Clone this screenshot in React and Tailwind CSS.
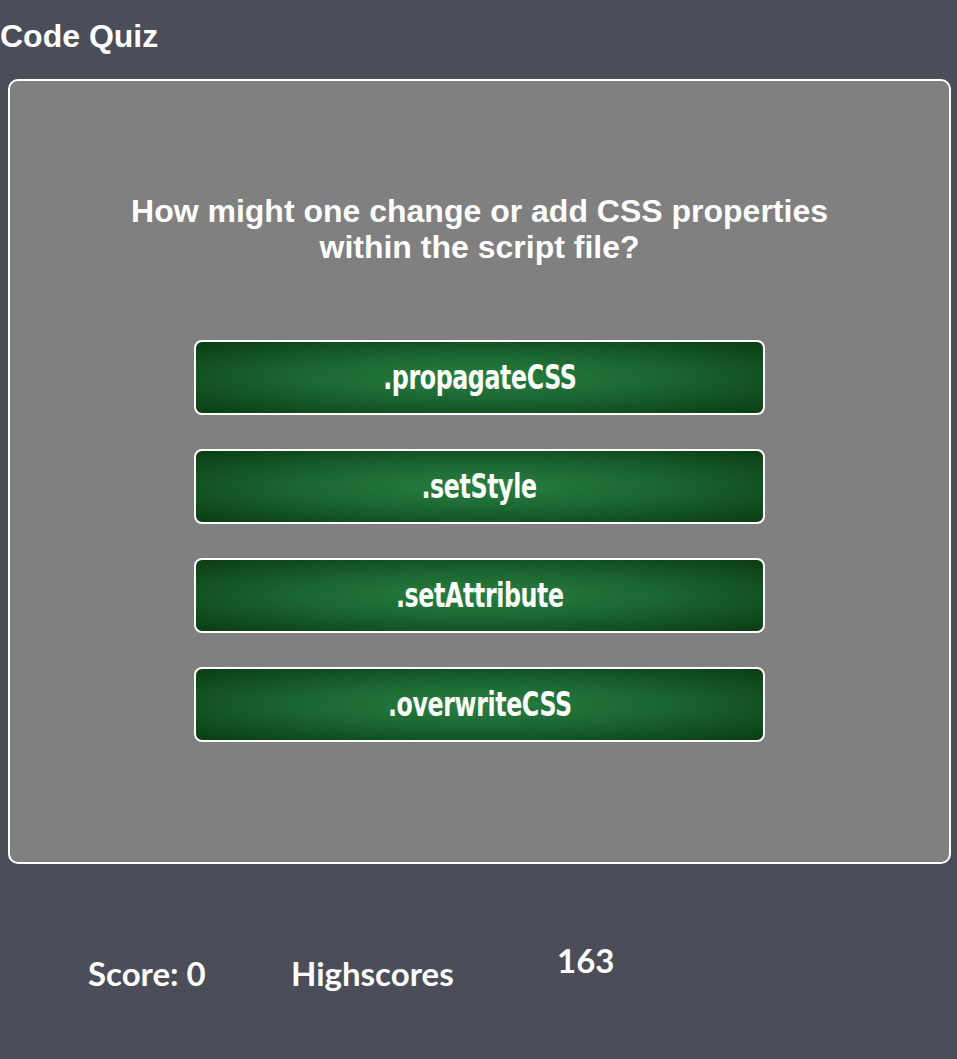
import React from 'react';

const answers = ['.propagateCSS', '.setStyle', '.setAttribute', '.overwriteCSS'];

const App = () => {
  return (
    <div className="min-h-screen w-full bg-[#4b4d58] font-['Liberation_Sans',Arial,sans-serif] text-white pb-10">
      {/* Header */}
      <header className="h-[79px] pt-[18px]">
        <h1 className="text-[32px] leading-[36px] font-bold">Code Quiz</h1>
      </header>

      {/* Quiz card */}
      <main className="ml-2 w-[943px] rounded-[10px] border-2 border-white bg-[#808080] pt-[112px] pb-[120px]">
        <h2 className="mx-auto max-w-[720px] text-center text-[32px] leading-[36px] font-bold">
          How might one change or add CSS properties within the script file?
        </h2>
        <div className="mt-[75px] flex flex-col items-center gap-[34px]">
          {answers.map((a) => (
            <button
              key={a}
              className="flex h-[75px] w-[571px] items-center justify-center rounded-lg border-2 border-white bg-[radial-gradient(ellipse_at_center,#287f40_0%,#1b6631_45%,#0a3c12_100%)]"
            >
              <span className="inline-block scale-x-[0.8] font-['DejaVu_Sans',sans-serif] font-stretch-condensed text-[33px] leading-none font-bold tracking-[-0.5px]">
                {a}
              </span>
            </button>
          ))}
        </div>
      </main>

      {/* Footer */}
      <footer className="flex items-start pl-[88px] pt-[80px] font-['Lato',sans-serif] font-bold text-[33px] leading-[33px]">
        <span className="mt-[13px] w-[203px]">Score: 0</span>
        <span className="mt-[13px] w-[266px]">Highscores</span>
        <span>163</span>
      </footer>
    </div>
  );
};

export default App;
